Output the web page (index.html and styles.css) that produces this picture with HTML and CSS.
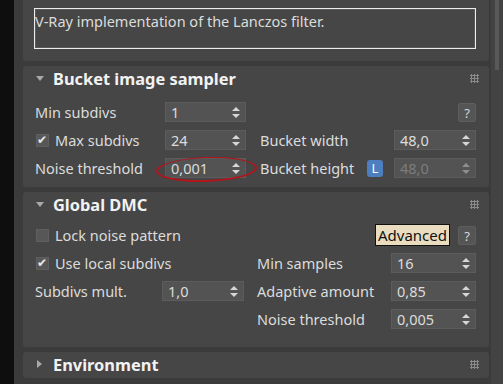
FILE: index.html
```html
<!DOCTYPE html>
<html lang="en">
<head>
  <meta charset="UTF-8">
  <title>V-Ray Image sampler</title>
  <link rel="stylesheet" href="styles.css">
</head>
<body>
  <div class="edge"></div>
  <div class="main">
    <div class="panels">
      <div class="panel filter">
        <div class="desc">V-Ray implementation of the Lanczos filter.</div>
      </div>

      <!-- Bucket image sampler -->
      <div class="panel">
        <div class="head">
          <span class="tri down"></span>
          <span class="title">Bucket image sampler</span>
          <span class="grip"></span>
        </div>
        <div class="grid bucket">
          <div class="label">Min subdivs</div>
          <div class="spin"><span>1</span><i></i></div>
          <div></div>
          <div></div>
          <div class="right"><button class="help">?</button></div>

          <div class="label"><span class="check on"></span>Max subdivs</div>
          <div class="spin"><span>24</span><i></i></div>
          <div></div>
          <div class="label">Bucket width</div>
          <div class="spin"><span>48,0</span><i></i></div>

          <div class="label">Noise threshold</div>
          <div class="spin marked"><span>0,001</span><i></i></div>
          <div></div>
          <div class="label split">Bucket height <span class="lock">L</span></div>
          <div class="spin off"><span>48,0</span><i></i></div>
        </div>
      </div>

      <!-- Global DMC -->
      <div class="panel">
        <div class="head">
          <span class="tri down"></span>
          <span class="title">Global DMC</span>
          <span class="grip"></span>
        </div>
        <div class="grid dmc">
          <div class="label wide"><span class="check"></span>Lock noise pattern</div>
          <div class="right span2"><button class="adv">Advanced</button><button class="help">?</button></div>

          <div class="label wide"><span class="check on"></span>Use local subdivs</div>
          <div class="label">Min samples</div>
          <div class="spin"><span>16</span><i></i></div>

          <div class="label">Subdivs mult.</div>
          <div class="spin"><span>1,0</span><i></i></div>
          <div></div>
          <div class="label">Adaptive amount</div>
          <div class="spin"><span>0,85</span><i></i></div>

          <div></div>
          <div></div>
          <div></div>
          <div class="label">Noise threshold</div>
          <div class="spin"><span>0,005</span><i></i></div>
        </div>
      </div>

      <div class="panel env">
        <div class="head">
          <span class="tri right"></span>
          <span class="title">Environment</span>
          <span class="grip"></span>
        </div>
      </div>
    </div>
    <div class="scroll"><div class="thumb"></div></div>
  </div>
</body>
</html>
```

FILE: styles.css
```css
* {
  margin: 0;
  padding: 0;
  box-sizing: border-box;
}

body {
  display: flex;
  height: 384px;
  overflow: hidden;
  background-color: #0e0e0e;
  font-family: "Noto Sans", "Open Sans", sans-serif;
  font-size: 14.5px;
  color: #dcdcdc;
}

.edge {
  width: 16px;
}

.main {
  flex: 1;
  display: flex;
  background-color: #3b3b3b;
  padding-left: 9px;
}

.panels {
  width: 466px;
  display: flex;
  flex-direction: column;
  gap: 5px;
}

.panel {
  background-color: #464646;
  border-radius: 3px;
  padding: 0 13px 0 11px;
}

/* Filter description */
.filter {
  height: 61px;
  padding-top: 8px;
  border-radius: 0 0 3px 3px;
}

.desc {
  height: 41px;
  border: 1px solid #ececec;
  box-shadow: inset 0 0 0 1px #5a5a5a;
  padding-top: 2px;
  overflow: hidden;
  white-space: nowrap;
  line-height: 20px;
}

/* Rollout header */
.head {
  height: 24px;
  display: flex;
  align-items: center;
}

.title {
  font-weight: bold;
  font-size: 16.4px;
  color: #f2f2f2;
  margin-left: 9px;
}

.tri {
  width: 0;
  height: 0;
  margin-left: 2px;
}

.tri.down {
  border-left: 4px solid transparent;
  border-right: 4px solid transparent;
  border-top: 5px solid #a9a9a9;
}

.tri.right {
  border-top: 4px solid transparent;
  border-bottom: 4px solid transparent;
  border-left: 5px solid #a9a9a9;
  margin-left: 3px;
  margin-right: 2px;
}

.grip {
  margin-left: auto;
  margin-right: -3px;
  width: 9px;
  height: 9px;
  background-image: radial-gradient(circle, #8a8a8a 1px, transparent 1.2px);
  background-size: 3px 3px;
}

/* Parameter grids */
.grid {
  display: grid;
  grid-auto-rows: 28px;
  align-items: center;
}

.bucket {
  grid-template-columns: 131px 81px 13px 135px 82px;
  padding: 8px 0 5px;
}

.dmc {
  grid-template-columns: 128px 82px 12px 135px 85px;
  padding: 5px 0 14px;
}

.wide {
  grid-column: span 3;
}

.span2 {
  grid-column: span 2;
}

.label {
  display: flex;
  align-items: center;
  white-space: nowrap;
  padding-left: 1px;
}

.split {
  justify-content: space-between;
  padding-right: 11px;
}

.right {
  display: flex;
  justify-content: flex-end;
  align-items: center;
  gap: 8px;
}

.check {
  width: 13px;
  height: 13px;
  margin: 0 6px 0 1px;
  background-color: #575757;
  border: 1px solid #5f5f5f;
  position: relative;
}

.check.on::after {
  content: "\2714";
  position: absolute;
  left: 0;
  top: -4px;
  font-size: 12px;
  color: #e8e8e8;
}

.spin {
  height: 20px;
  background-color: #535353;
  border: 1px solid #5c5c5c;
  display: flex;
  align-items: center;
  padding-left: 5px;
  position: relative;
}

/* up / down arrows */
.spin i {
  margin-left: auto;
  margin-right: 5px;
  width: 8px;
  height: 11px;
  display: flex;
  flex-direction: column;
  justify-content: space-between;
  align-items: center;
}

.spin i::before,
.spin i::after {
  content: "";
  width: 0;
  height: 0;
  border-left: 4px solid transparent;
  border-right: 4px solid transparent;
}

.spin i::before {
  border-bottom: 4px solid #d6d6d6;
}

.spin i::after {
  border-top: 4px solid #d6d6d6;
}

.spin.off {
  color: #7c7c7c;
}

.spin.off i {
  opacity: 0.45;
}

/* red hand-drawn circle */
.spin.marked::after {
  content: "";
  position: absolute;
  left: -10px;
  right: -12px;
  top: -2px;
  bottom: -5px;
  border: 2px solid #b3141a;
  border-top-width: 1.5px;
  border-radius: 50%;
  transform: rotate(-2deg);
}

.lock {
  width: 16px;
  height: 17px;
  background-color: #4d7fc0;
  border-radius: 3px;
  color: #fff;
  font-size: 13px;
  display: flex;
  align-items: center;
  justify-content: center;
}

.help {
  width: 18px;
  height: 19px;
  background-color: #555;
  border: 1px solid #5e5e5e;
  border-radius: 2px;
  color: #d8d8d8;
  font-family: inherit;
  font-size: 13px;
}

.adv {
  height: 22px;
  padding: 0 2px;
  background-color: #e9dcbf;
  border: 1px solid #111;
  color: #111;
  font-family: inherit;
  font-size: 15px;
}

.env {
  height: 26px;
}

.scroll {
  width: 12px;
  margin-left: 2px;
  background-color: #434343;
}

.thumb {
  width: 4px;
  height: 70px;
  margin-left: 4px;
  background-color: #595959;
}
```
